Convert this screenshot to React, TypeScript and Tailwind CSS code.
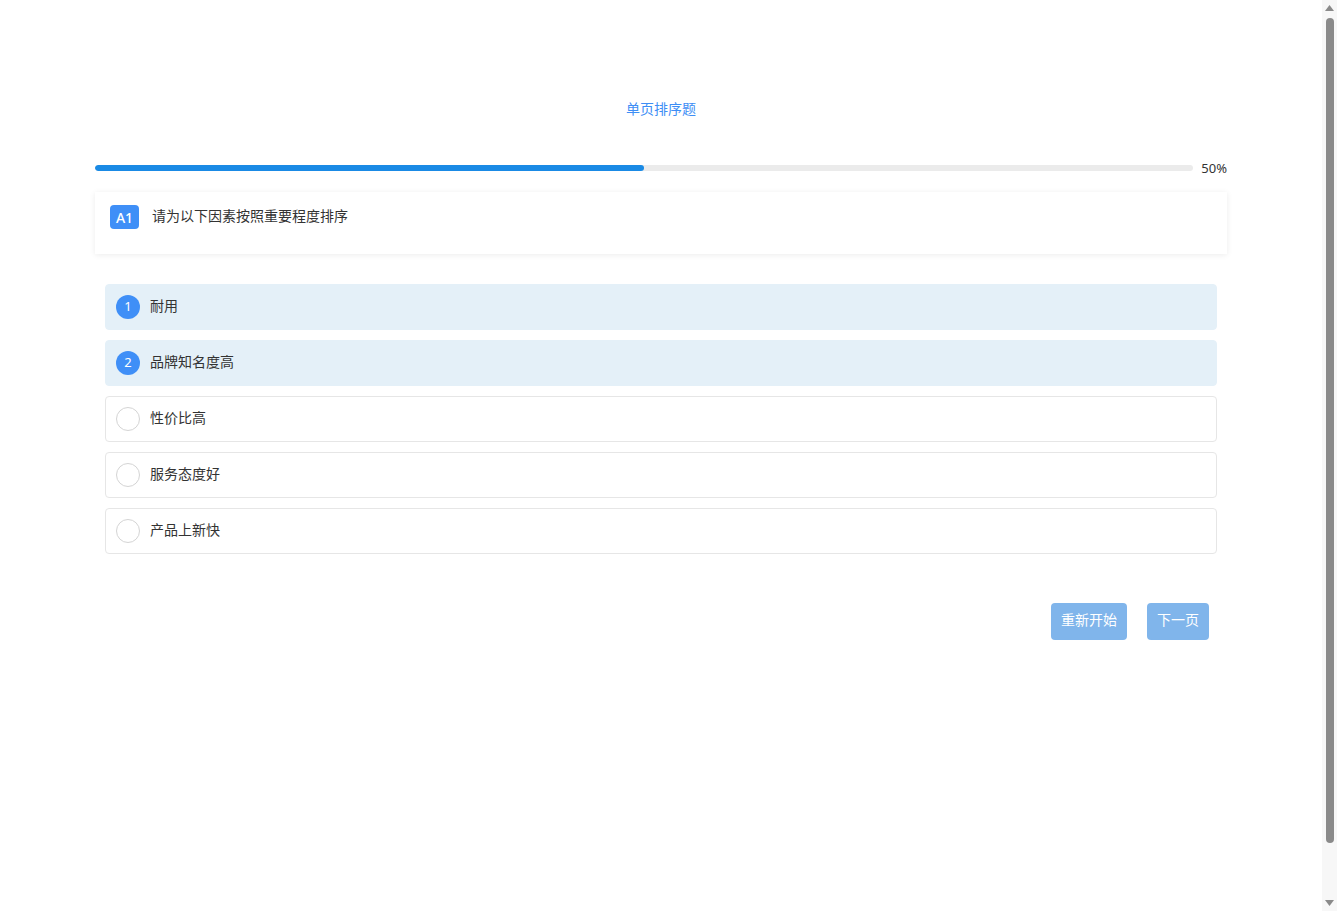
import React from "react";

const options = [
  { label: "耐用", rank: 1 },
  { label: "品牌知名度高", rank: 2 },
  { label: "性价比高", rank: 0 },
  { label: "服务态度好", rank: 0 },
  { label: "产品上新快", rank: 0 },
];

export default function App() {
  return (
    <div
      className="relative h-[911px] overflow-hidden bg-white text-[#333] pr-[15px]"
      style={{ fontFamily: '"Noto Sans", "Noto Sans CJK SC", sans-serif' }}
    >
      <div className="w-[1132px] mx-auto pt-[99px]">
        {/* Title */}
        <div className="text-center text-[14px] leading-5 text-[#3d8ef5]">单页排序题</div>

        {/* Progress */}
        <div className="mt-[39px] flex items-center h-5">
          <div className="flex-1 h-[6px] rounded-full bg-[#ebebeb] overflow-hidden">
            <div className="h-full w-1/2 rounded-full bg-[#1a8ae5]" />
          </div>
          <div className="ml-2 text-[13px] text-[#333] mt-[1px]">50%</div>
        </div>

        {/* Question card */}
        <div className="mt-[14px] h-[62px] bg-white shadow-[0_1px_6px_rgba(0,0,0,0.08)] px-[15px] pt-[13px]">
          <div className="flex items-center">
            <span className="inline-flex items-center justify-center h-6 w-[29px] rounded-[4px] bg-[#3f8ff7] text-white text-[14px] font-medium">
              A1
            </span>
            <span className="ml-[13px] text-[14px] leading-5 -mt-[2px] text-[#333]">请为以下因素按照重要程度排序</span>
          </div>
        </div>

        {/* Options */}
        <div className="mt-[30px] px-[10px] flex flex-col gap-[10px]">
          {options.map((o) => (
            <div
              key={o.label}
              className={
                o.rank
                  ? "h-[46px] flex items-center px-[10px] rounded-[4px] bg-[#e4f0f8] border border-[#e4f0f8]"
                  : "h-[46px] flex items-center px-[10px] rounded-[4px] bg-white border border-[#e6e6e6]"
              }
            >
              {o.rank ? (
                <span className="w-6 h-6 rounded-full bg-[#3f8ff7] text-white text-[13px] flex items-center justify-center">
                  {o.rank}
                </span>
              ) : (
                <span className="w-6 h-6 rounded-full border border-[#d4d4d4] bg-white" />
              )}
              <span className="ml-[10px] text-[14px] leading-5 -mt-[2px] text-[#333]">{o.label}</span>
            </div>
          ))}
        </div>

        {/* Buttons */}
        <div className="mt-[49px] flex justify-end gap-5 pr-[18px]">
          <button className="h-[37px] px-[10px] pb-[5px] rounded-[4px] bg-[#80b5eb] text-white text-[14px]">重新开始</button>
          <button className="h-[37px] px-[10px] pb-[5px] rounded-[4px] bg-[#80b5eb] text-white text-[14px]">下一页</button>
        </div>
      </div>

      {/* browser scrollbar */}
      <div className="absolute right-0 top-0 w-[15px] h-full bg-[#f7f7f7] flex flex-col items-center">
        <svg width="9" height="6" viewBox="0 0 9 6" className="mt-[5px]">
          <path d="M0 6 L4.5 0 L9 6 Z" fill="#8a8a8a" />
        </svg>
        <div className="mt-[7px] w-[8px] h-[825px] rounded-full bg-[#8a8a8a]" />
        <div className="flex-1" />
        <svg width="9" height="6" viewBox="0 0 9 6" className="mb-[5px]">
          <path d="M0 0 L9 0 L4.5 6 Z" fill="#8a8a8a" />
        </svg>
      </div>
    </div>
  );
}
